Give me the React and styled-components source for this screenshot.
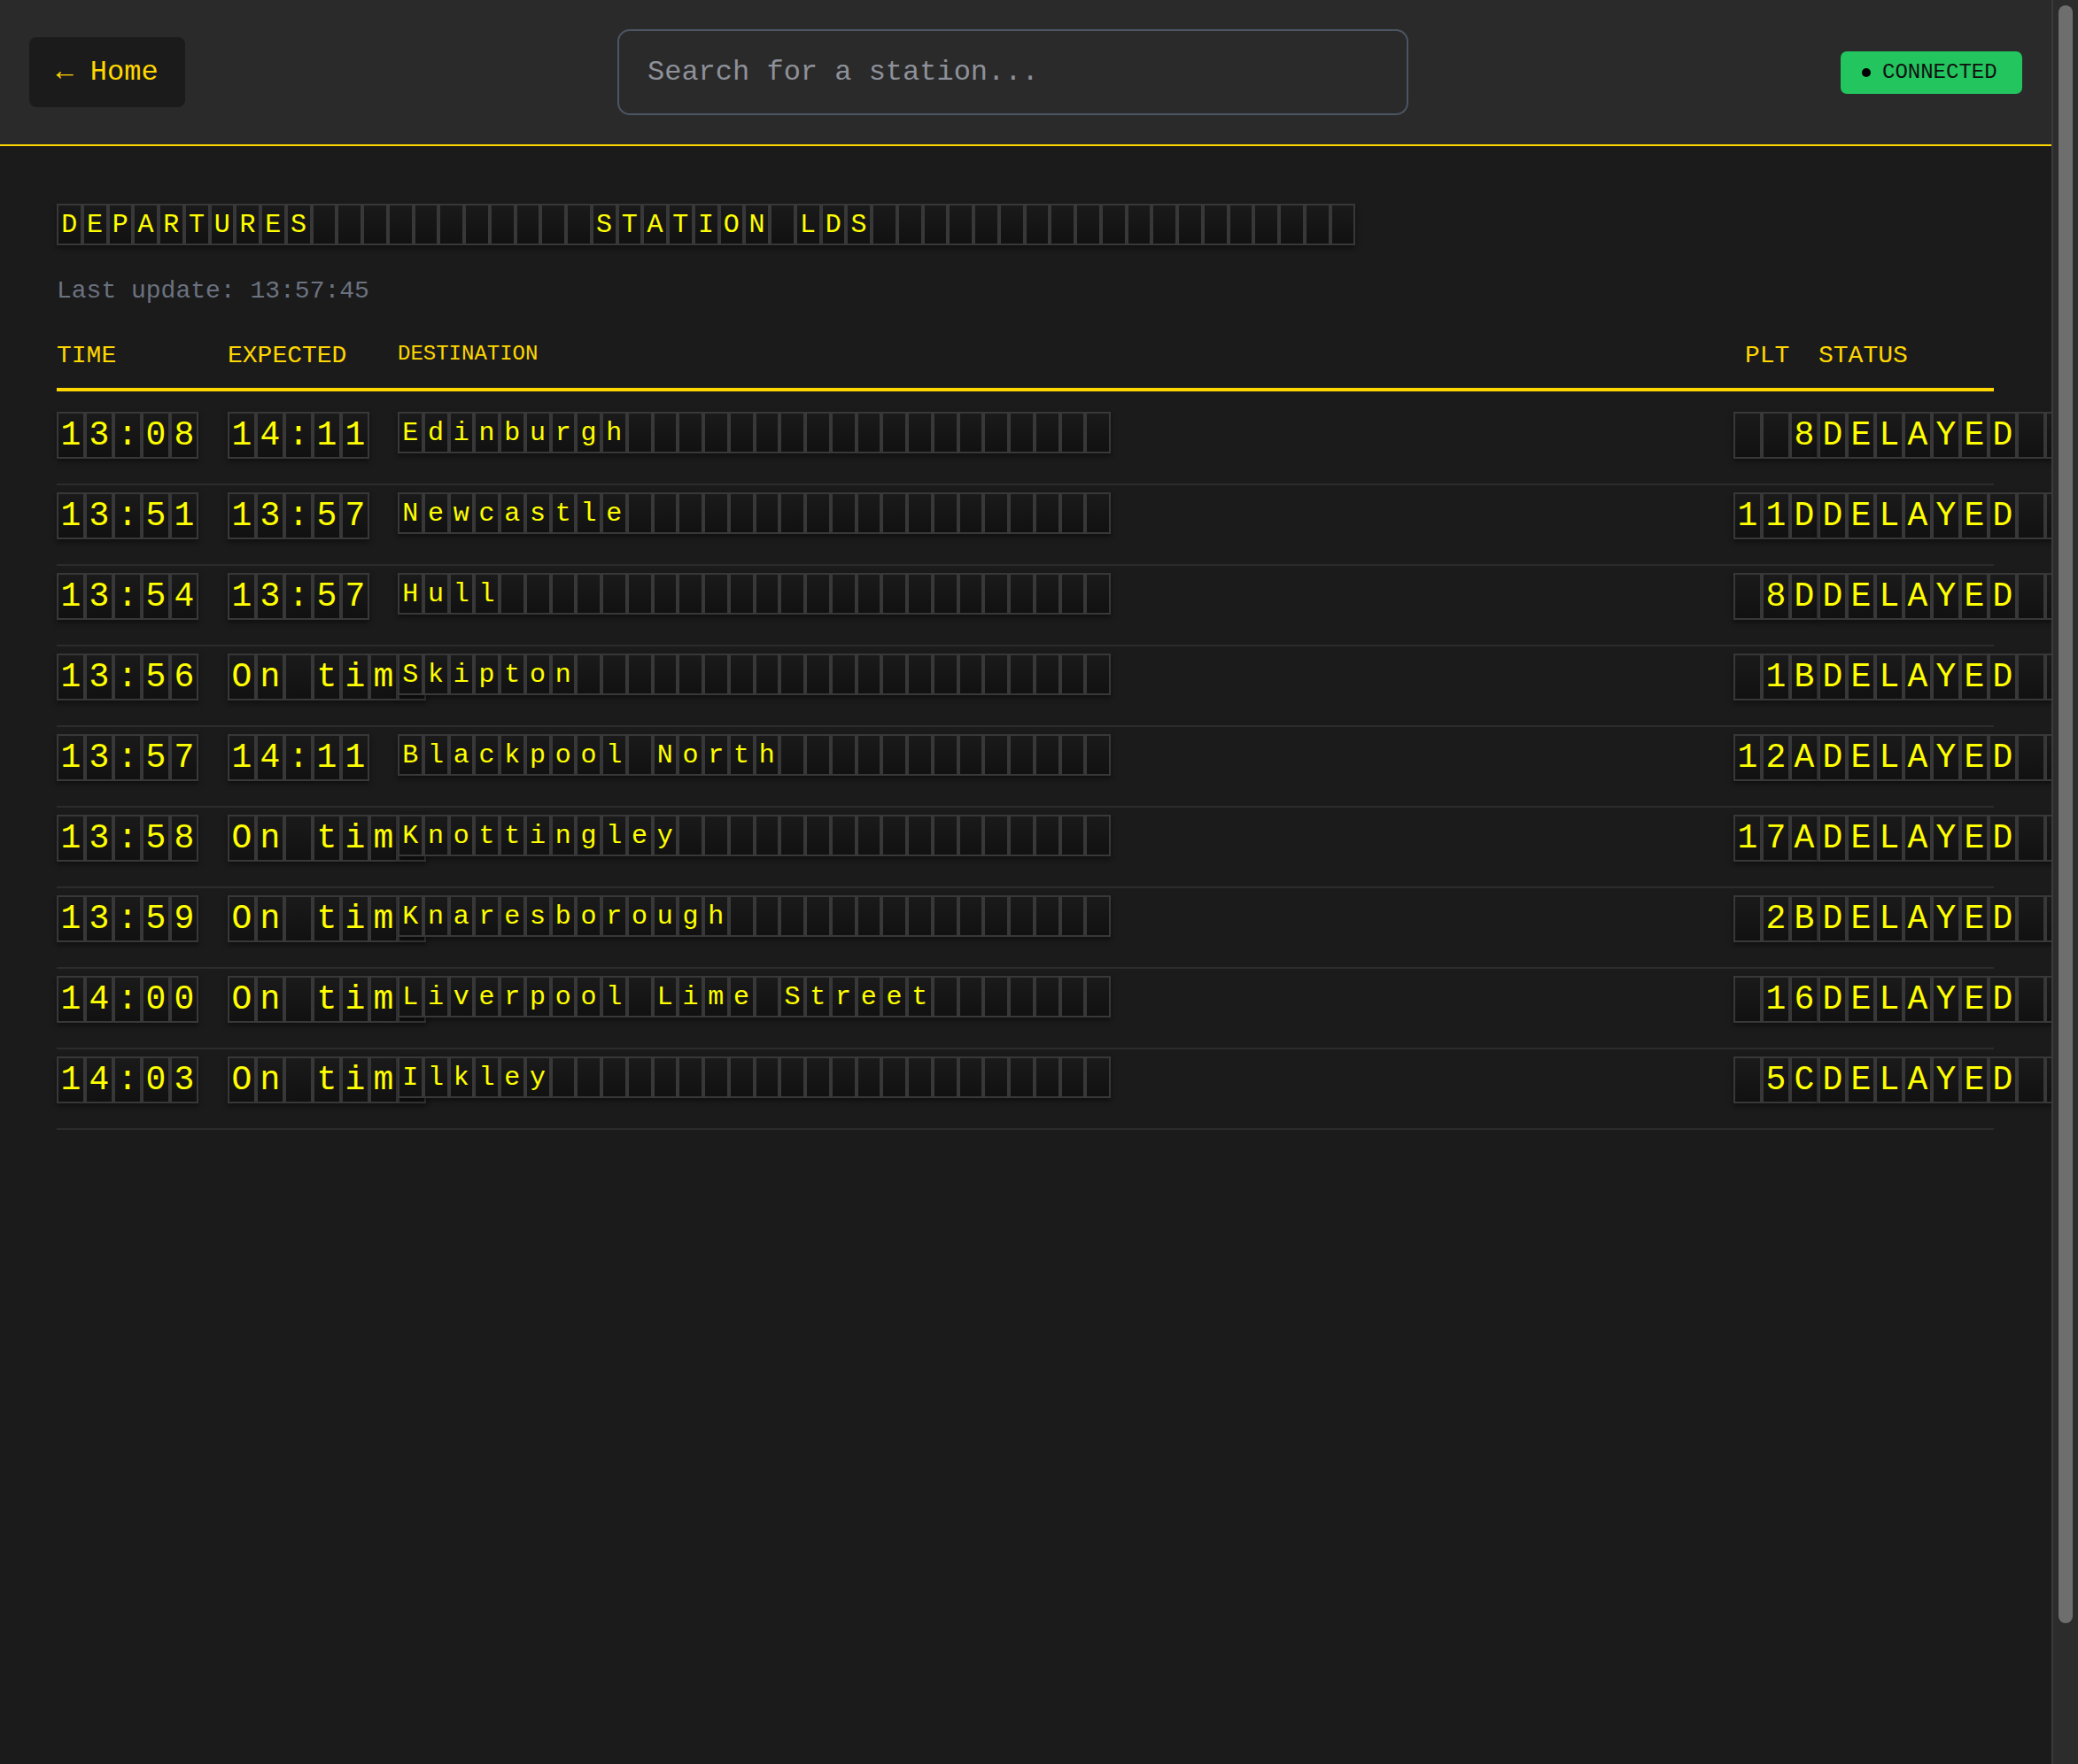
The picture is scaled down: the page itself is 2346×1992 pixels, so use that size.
import React from 'react';
import styled, { createGlobalStyle } from 'styled-components';

const mono = `"Courier New", Courier, "Liberation Mono", monospace`

const GlobalStyle = createGlobalStyle`
  html, body {
    margin: 0;
    overflow: hidden;
    background: #1b1b1b;
    font-family: ${mono};
  }
`

const Frame = styled.div`
  display: flex;
  height: 100vh;
`

const Shell = styled.div`
  flex: 1;
  min-width: 0;
  overflow-x: hidden;
  overflow-y: auto;
`

// stand-in for the browser's dark scrollbar seen in the screenshot
const ScrollRail = styled.div`
  flex: none;
  width: 16px;
  padding: 6px 6px 0;
  background: #2c2c2c;
  border-left: 2px solid #3a3a3a;
`

const ScrollThumb = styled.div`
  height: 1827px;
  border-radius: 8px;
  background: #6e6e6e;
`

const TopBar = styled.header`
  display: flex;
  justify-content: space-between;
  align-items: center;
  height: 163px;
  padding: 0 33px;
  background: #2a2a2a;
  border-bottom: 2px solid #ffd700;
`

const HomeButton = styled.button`
  box-sizing: border-box;
  width: 176px;
  height: 79px;
  padding: 0;
  border: none;
  border-radius: 8px;
  background: #1b1b1b;
  color: #ffd700;
  font-family: ${mono};
  font-size: 32px;
  cursor: pointer;
`

const SearchInput = styled.input`
  box-sizing: border-box;
  width: 893px;
  height: 97px;
  padding: 0 32px;
  border: 2px solid #4b5563;
  border-radius: 14px;
  background: #2a2a2a;
  color: #e5e5e5;
  font-family: ${mono};
  font-size: 32px;
  &::placeholder {
    color: #8e9199;
  }
  &:focus {
    outline: none;
  }
`

const Badge = styled.div`
  box-sizing: border-box;
  display: flex;
  align-items: center;
  gap: 13px;
  width: 205px;
  height: 48px;
  padding: 0 24px;
  border-radius: 7px;
  background: #22c55e;
  color: #111;
  font-size: 24px;
`

const Dot = styled.span`
  width: 10px;
  height: 10px;
  border-radius: 50%;
  background: #000;
`

const Main = styled.main`
  box-sizing: border-box;
  min-height: 100vh;
  padding: 65px 65px 64px 64px;
`

const Board = styled.div`
  display: flex;
  width: max-content;
  justify-self: ${props => props.$end ? 'end' : 'start'};
  box-shadow: 0 3px 6px rgba(0, 0, 0, 0.45);
`

const Cell = styled.span`
  box-sizing: border-box;
  flex: none;
  display: flex;
  align-items: center;
  justify-content: center;
  width: ${props => props.$big ? '32px' : '28.75px'};
  height: ${props => props.$big ? '53px' : '47px'};
  border: 2px solid #383838;
  background: linear-gradient(180deg, #1a1a1a 0%, #111 100%);
  color: #ffff00;
  font-size: ${props => props.$big ? '38px' : '30px'};
  line-height: 1;
  white-space: pre;
`

const Updated = styled.div`
  margin-top: 36px;
  color: #6b7280;
  font-size: 28px;
`

const Table = styled.div`
  margin-top: 42px;
`

const Columns = styled.div`
  display: grid;
  grid-template-columns: 193px 192px 1fr 83px 198px;
  align-items: start;
`

const HeadRow = styled(Columns)`
  padding-bottom: 21px;
  margin-bottom: 15px;
  border-bottom: 4px solid #ffd700;
`

const HeadLabel = styled.div`
  color: #ffd700;
  font-size: ${props => props.$small ? '24px' : '28px'};
`

const Row = styled(Columns)`
  padding: 8px 0 28px;
  border-bottom: 2px solid #2c2c2c;
`

const FlapBoard = ({ text, length, big, end, padStart }) => {
  const filled = padStart ? text.padStart(length, ' ') : text.padEnd(length, ' ')
  return (
    <Board $end={end}>
      {filled.slice(0, length).split('').map((ch, i) => (
        <Cell key={i} $big={big}>{ch}</Cell>
      ))}
    </Board>
  )
}

const departures = [
  { time: '13:08', expected: '14:11', destination: 'Edinburgh', platform: '8' },
  { time: '13:51', expected: '13:57', destination: 'Newcastle', platform: '11D' },
  { time: '13:54', expected: '13:57', destination: 'Hull', platform: '8D' },
  { time: '13:56', expected: 'On time', destination: 'Skipton', platform: '1B' },
  { time: '13:57', expected: '14:11', destination: 'Blackpool North', platform: '12A' },
  { time: '13:58', expected: 'On time', destination: 'Knottingley', platform: '17A' },
  { time: '13:59', expected: 'On time', destination: 'Knaresborough', platform: '2B' },
  { time: '14:00', expected: 'On time', destination: 'Liverpool Lime Street', platform: '16' },
  { time: '14:03', expected: 'On time', destination: 'Ilkley', platform: '5C' },
]

export default function App() {
  return (
    <Frame>
      <GlobalStyle />
      <Shell>
        <TopBar>
          <HomeButton>← Home</HomeButton>
          <SearchInput type="text" placeholder="Search for a station..." />
          <Badge>
            <Dot />
            CONNECTED
          </Badge>
        </TopBar>
        <Main>
          <FlapBoard text={'DEPARTURES' + ' '.repeat(11) + 'STATION LDS'} length={51} />
          <Updated>Last update: 13:57:45</Updated>
          <Table>
            <HeadRow>
              <HeadLabel>TIME</HeadLabel>
              <HeadLabel>EXPECTED</HeadLabel>
              <HeadLabel $small>DESTINATION</HeadLabel>
              <HeadLabel>PLT</HeadLabel>
              <HeadLabel>STATUS</HeadLabel>
            </HeadRow>
            {departures.map((d, i) => (
              <Row key={i}>
                <FlapBoard text={d.time} length={5} big />
                <FlapBoard text={d.expected} length={d.expected.length} big />
                <FlapBoard text={d.destination} length={28} />
                <FlapBoard text={d.platform} length={3} big end padStart />
                <FlapBoard text="DELAYED" length={12} big />
              </Row>
            ))}
          </Table>
        </Main>
      </Shell>
      <ScrollRail>
        <ScrollThumb />
      </ScrollRail>
    </Frame>
  )
}
